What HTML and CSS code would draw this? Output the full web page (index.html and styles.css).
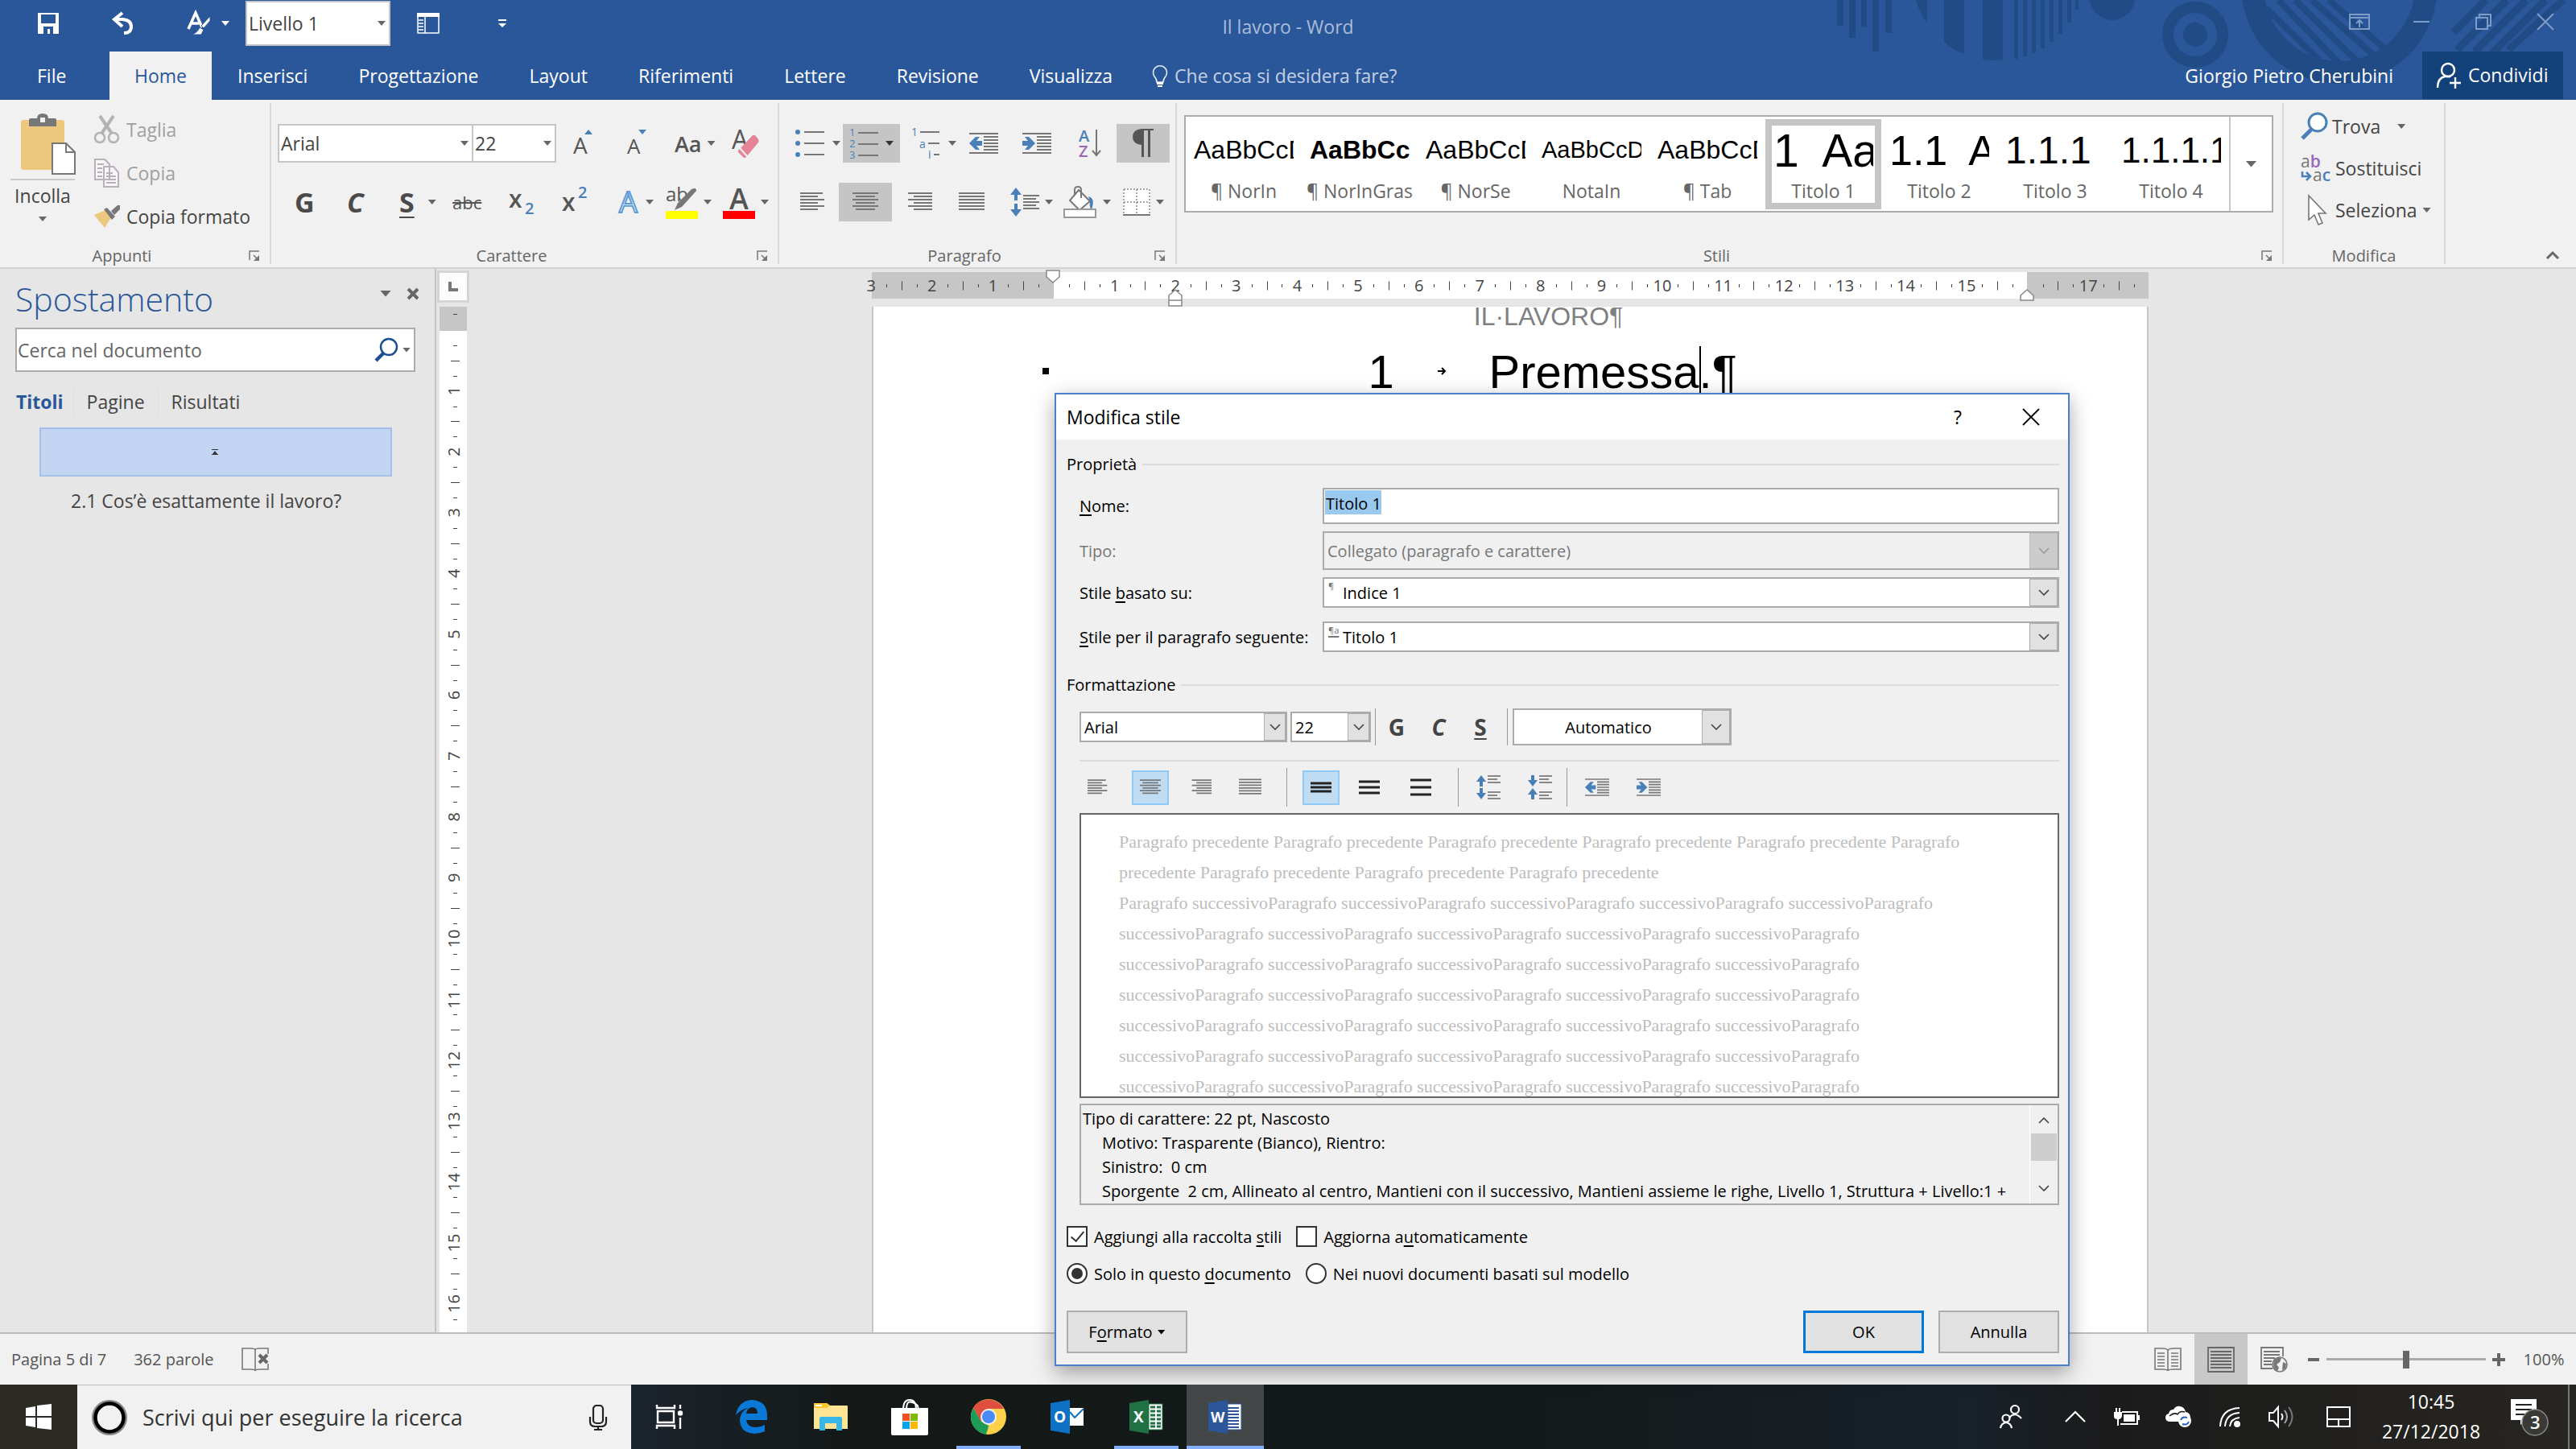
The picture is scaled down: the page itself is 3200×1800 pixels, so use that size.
FILE: index.html
```html
<!DOCTYPE html>
<html lang="it">
<head>
    <meta charset="UTF-8">
    <meta name="viewport" content="width=device-width, initial-scale=1.0">
    <title>Il lavoro - Word</title>
    <link rel="stylesheet" href="styles.css">
</head>
<body>
    <!-- Icone condivise -->
    <svg class="sprites" width="0" height="0" aria-hidden="true">
        <symbol id="al-left" viewBox="0 0 32 24"><path d="M0 1h28M0 5h22M0 9h30M0 13h22M0 17h30M0 21h22" stroke="currentColor" stroke-width="2"/></symbol>
        <symbol id="al-center" viewBox="0 0 32 24"><path d="M0 1h32M4 5h24M0 9h32M4 13h24M0 17h32M4 21h24" stroke="currentColor" stroke-width="2"/></symbol>
        <symbol id="al-right" viewBox="0 0 32 24"><path d="M2 1h30M9 5h23M2 9h30M9 13h23M2 17h30M9 21h23" stroke="currentColor" stroke-width="2"/></symbol>
        <symbol id="al-just" viewBox="0 0 32 24"><path d="M0 1h32M0 5h32M0 9h32M0 13h32M0 17h32M0 21h32" stroke="currentColor" stroke-width="2"/></symbol>
        <symbol id="outdent" viewBox="0 0 36 28"><path d="M0 2h36M18 6h18M18 10h18M18 14h18M18 18h18M18 22h18M0 26h36" stroke="#777" stroke-width="2"/><path d="M0 14l8-8h5l-4 5h7v6H9l4 5H8z" fill="#4a80b8"/></symbol>
        <symbol id="indent" viewBox="0 0 36 28"><path d="M0 2h36M18 6h18M18 10h18M18 14h18M18 18h18M18 22h18M0 26h36" stroke="#777" stroke-width="2"/><path d="M16 14L8 6H3l4 5H0v6h7l-4 5h5z" fill="#4a80b8"/></symbol>
        <symbol id="launcher" viewBox="0 0 14 14"><path d="M1 12V1h12M6 6l5 5" fill="none" stroke="#777" stroke-width="1.5"/><path d="M13 6v7H6z" fill="#777"/></symbol>
        <symbol id="chev" viewBox="0 0 14 8"><path d="M1 1l6 6 6-6" fill="none" stroke="currentColor" stroke-width="1.6"/></symbol>
    </svg>

    <header class="titlebar">
        <svg class="pattern" width="920" height="104" viewBox="2280 0 920 104" fill="#214b85" aria-hidden="true">
            <path d="M2282 0h8v32h-8zM2297 0h8v47h-8zM2312 0h7v34h-7zM2326 0h8v64h-8zM2342 0h8v41h-8z"/>
            <path d="M2380 0h14v28q-10-12-14-28zM2415 0h25v67q-15-5-25-15zM2463 0h25v74q-12 2-25 0z"/>
            <path d="M2502 0h5v73h-5zM2513 0h5v70h-5zM2524 0h5v66h-5zM2535 0h5v60h-5zM2546 0h5v52h-5zM2557 0h5v42h-5zM2568 0h5v28h-5zM2578 0h4v12h-4z"/>
            <circle cx="2624" cy="-3" r="28"/>
            <circle cx="2727" cy="43" r="34" fill="none" stroke="#214b85" stroke-width="14"/>
            <circle cx="2727" cy="43" r="15"/>
            <circle cx="2906" cy="-18" r="108" fill="none" stroke="#214b85" stroke-width="28"/>
            <path d="M2815 10L2880 74M2830 0L2905 78M2851 0L2928 76M2872 0L2948 68M2893 0L2962 60" stroke="#214b85" stroke-width="8"/>
            <path d="M3048 40L3088 0M3052 62L3114 0M3074 64L3138 0M3092 70L3162 0M3116 62L3184 0" stroke="#214b85" stroke-width="9"/>
        </svg>
        <div class="title-row">
            <div class="quick">
                <button aria-label="Salva"><svg width="26" height="26" viewBox="0 0 26 26"><path d="M0 0h26v26H0z" fill="#fff"/><path d="M4 2h18v11H4zM7 17h12v9h-4v-6h-3v6H7z" fill="#2a579a"/></svg></button>
                <button aria-label="Annulla digitazione"><svg width="28" height="28" viewBox="0 0 28 28"><path d="M13 1L3 9l10 9M4 9h9q11 1 11 9 0 8-9 8" fill="none" stroke="#fff" stroke-width="4"/></svg></button>
                <button aria-label="Stili"><svg width="30" height="30" viewBox="0 0 30 30"><path d="M1 22L10 2l8 18M4 15h10" fill="none" stroke="#fff" stroke-width="3.5"/><path d="M28 6v6l-8 9-3-3zM15 20l5 3-3 6H5q7-2 10-9z" fill="#fff" stroke="#2a579a"/></svg><span class="arr light"></span></button>
                <label class="combo level"><select aria-label="Livello"><option>Livello 1</option></select></label>
                <button aria-label="Riquadro"><svg width="28" height="26" viewBox="0 0 28 26"><path d="M1 1h26v24H1z" fill="none" stroke="#fff" stroke-width="1.5"/><path d="M0 0h28v5H0z" fill="#fff"/><path d="M10 5v20M2 9h6M2 13h6M2 17h6M2 21h6" stroke="#fff" stroke-width="1.5"/></svg></button>
                <button aria-label="Personalizza"><svg width="10" height="10" viewBox="0 0 10 10"><path d="M0 0h10v2H0zM0 5h10L5 10z" fill="#fff"/></svg></button>
            </div>
            <h1>Il lavoro - Word</h1>
            <div class="win-buttons">
                <button aria-label="Opzioni barra"><svg width="26" height="20" viewBox="0 0 26 20" fill="none" stroke="#7f9cc8" stroke-width="2"><path d="M1 1h24v18H1zM1 5h24M13 17V8M9 12l4-4 4 4"/></svg></button>
                <button aria-label="Riduci"><svg width="20" height="20" viewBox="0 0 20 20"><path d="M0 10h20" stroke="#7f9cc8" stroke-width="2"/></svg></button>
                <button aria-label="Ripristina"><svg width="20" height="20" viewBox="0 0 20 20" fill="none" stroke="#7f9cc8" stroke-width="2"><path d="M1 5h14v14H1zM5 5V1h14v14h-4"/></svg></button>
                <button aria-label="Chiudi"><svg width="20" height="20" viewBox="0 0 20 20"><path d="M0 0l20 20M20 0L0 20" stroke="#7f9cc8" stroke-width="2"/></svg></button>
            </div>
        </div>
        <nav class="tabs">
            <a href="#" class="file">File</a>
            <a href="#" class="active">Home</a>
            <a href="#">Inserisci</a>
            <a href="#">Progettazione</a>
            <a href="#">Layout</a>
            <a href="#">Riferimenti</a>
            <a href="#">Lettere</a>
            <a href="#">Revisione</a>
            <a href="#">Visualizza</a>
            <label class="tellme">
                <svg width="20" height="28" viewBox="0 0 20 28"><path d="M6 22q0-4-3-7a8.500 8.500 0 1 1 14 0q-3 3-3 7z" fill="none" stroke="#e6ecf5" stroke-width="1.600"/><path d="M6 22h8v3H6zM7 26h6v2H7z" fill="#fff"/></svg>
                <input type="text" placeholder="Che cosa si desidera fare?">
            </label>
            <a href="#" class="user">Giorgio Pietro Cherubini</a>
            <button class="share"><svg width="32" height="32" viewBox="0 0 32 32" fill="none" stroke="#fff" stroke-width="2.400"><circle cx="15" cy="9" r="8"/><path d="M2 31q0-12 9-14l7 0M17 25h14M24 18v14"/></svg>Condividi</button>
        </nav>
    </header>

    <section class="ribbon">
        <div class="group clipboard">
            <div class="clip-body">
                <button class="paste">
                    <svg width="70" height="76" viewBox="0 0 70 76"><rect x="0" y="8" width="54" height="62" rx="3" fill="#eec77e"/><path d="M10 16V8q0-2 2-2h8q0-6 7-6t7 6h8q2 0 2 2v8z" fill="#777"/><path d="M24 5h6v6h-6z" fill="#f1f1f1"/><path d="M39 37h17l11 11v27H39z" fill="#fff" stroke="#777" stroke-width="2"/><path d="M56 37v11h11" fill="none" stroke="#777" stroke-width="2"/></svg>
                    <span class="rule"></span>
                    <span>Incolla</span>
                    <span class="arr"></span>
                </button>
                <div class="clip-list">
                    <button disabled><svg width="32" height="34" viewBox="0 0 32 34" fill="none" stroke="#b3b3b3"><circle cx="7" cy="27" r="6" stroke-width="2.500"/><circle cx="24" cy="27" r="6" stroke-width="2.500"/><path d="M7 0L22 22M24 0L9 22" stroke-width="4"/></svg>Taglia</button>
                    <button disabled><svg width="32" height="36" viewBox="0 0 32 36" fill="#f6f6f6" stroke="#b9b0b9" stroke-width="2"><path d="M1 1h12l6 6v19H1zM12 10h12l6 7v18H12z"/><path d="M4 7h8M4 12h6M4 17h6M4 22h6M15 18h8M15 22h12M15 26h12M15 30h12"/></svg>Copia</button>
                    <button><svg width="32" height="28" viewBox="0 0 32 28"><path d="M0 12l14-6 8 8-9 14z" fill="#eec77e"/><path d="M12 5l4-2 10 11-4 4zM21 7l8-7h3v5l-7 7z" fill="#777"/></svg>Copia formato</button>
                </div>
            </div>
            <footer>Appunti<button class="launch" aria-label="Altro"><svg width="14" height="14"><use href="#launcher"/></svg></button></footer>
        </div>

        <div class="group font">
            <div class="row font-a">
                <label class="combo"><select aria-label="Tipo di carattere"><option>Arial</option></select></label>
                <label class="combo size"><select aria-label="Dimensione"><option>22</option></select></label>
                <button aria-label="Ingrandisci"><svg width="28" height="34" viewBox="0 0 28 34"><text x="0" y="30" font-size="28" fill="#555">A</text><path d="M14 6l5-6 5 6z" fill="#4a80b8"/></svg></button>
                <button aria-label="Riduci"><svg width="28" height="34" viewBox="0 0 28 34"><text x="0" y="30" font-size="26" fill="#555">A</text><path d="M14 0l5 6 5-6z" fill="#4a80b8"/></svg></button>
                <button aria-label="Maiuscole"><span class="glyph">Aa</span><span class="arr"></span></button>
                <button aria-label="Cancella formattazione"><svg width="36" height="38" viewBox="0 0 36 38"><text x="0" y="26" font-size="32" fill="#555">A</text><path d="M8 28L26 9q2-1 4 1l3 4q1 2 0 4L18 36q-2 2-4 0l-6-6z" fill="#e58497"/><path d="M10 25l9 10" stroke="#f1f1f1" stroke-width="2"/></svg></button>
            </div>
            <div class="row font-b">
                <button class="big"><b>G</b></button>
                <button class="big"><b><i>C</i></b></button>
                <button class="big"><b><u>S</u></b><span class="arr far"></span></button>
                <button class="abc"><s>abc</s></button>
                <button aria-label="Pedice"><svg width="34" height="36" viewBox="0 0 34 36"><text x="0" y="25" font-size="30" font-weight="600" fill="#555">x</text><text x="20" y="33" font-size="20" font-weight="600" fill="#4a80b8">2</text></svg></button>
                <button aria-label="Apice"><svg width="34" height="42" viewBox="0 0 34 42"><text x="0" y="32" font-size="30" font-weight="600" fill="#555">x</text><text x="20" y="16" font-size="20" font-weight="600" fill="#4a80b8">2</text></svg></button>
                <button aria-label="Effetti testo"><svg width="28" height="36" viewBox="0 0 28 36"><text x="2" y="31" font-size="36" fill="#fff" stroke="#5c9bd8" stroke-width="2">A</text></svg><span class="arr"></span></button>
                <button aria-label="Evidenziatore"><svg width="40" height="42" viewBox="0 0 40 42"><text x="0" y="20" font-size="24" fill="#555">ab</text><path d="M32 5q6-3 6 2L20 27l-9 4 4-9z" fill="#777"/><path d="M0 32h40v10H0z" fill="#ff0"/></svg><span class="arr"></span></button>
                <button aria-label="Colore carattere"><svg width="40" height="42" viewBox="0 0 40 42"><text x="8" y="30" font-size="36" font-weight="600" fill="#555">A</text><path d="M0 32h40v10H0z" fill="red"/></svg><span class="arr"></span></button>
            </div>
            <footer>Carattere<button class="launch" aria-label="Altro"><svg width="14" height="14"><use href="#launcher"/></svg></button></footer>
        </div>

        <div class="group para">
            <div class="row para-a">
                <button aria-label="Elenco puntato"><svg width="36" height="34" viewBox="0 0 36 34"><g fill="#4a80b8"><circle cx="3" cy="3" r="3"/><circle cx="3" cy="17" r="3"/><circle cx="3" cy="31" r="3"/></g><path d="M11 3h25M11 17h25M11 31h25" stroke="#777" stroke-width="2"/></svg><span class="arr"></span></button>
                <button class="on split" aria-label="Elenco numerato"><svg width="36" height="38" viewBox="0 0 36 38"><g fill="#4a80b8" font-size="13"><text x="0" y="10">1</text><text x="0" y="24">2</text><text x="0" y="38">3</text></g><path d="M11 6h25M11 20h25M11 34h25" stroke="#777" stroke-width="2"/></svg><span class="arr dark"></span></button>
                <button aria-label="Elenco a più livelli"><svg width="36" height="38" viewBox="0 0 36 38"><g fill="#4a80b8" font-size="14"><text x="0" y="10">1</text><text x="10" y="25">a</text><text x="21" y="38">i</text></g><path d="M11 5h24M21 19h14M28 33h7" stroke="#777" stroke-width="2"/></svg><span class="arr"></span></button>
                <button aria-label="Riduci rientro"><svg width="36" height="28"><use href="#outdent"/></svg></button>
                <button aria-label="Aumenta rientro"><svg width="36" height="28"><use href="#indent"/></svg></button>
                <button aria-label="Ordina"><svg width="28" height="38" viewBox="0 0 28 38"><text x="0" y="17" font-size="20" font-weight="600" fill="#4a80b8">A</text><text x="0" y="36" font-size="20" font-weight="600" fill="#9a68b8">Z</text><path d="M22 2v33M17 28l5 6 5-6" fill="none" stroke="#777" stroke-width="2"/></svg></button>
                <button class="on" aria-label="Mostra tutto"><svg width="26" height="36" viewBox="0 0 26 36"><path d="M11 20Q0 19 0 10T11 0h15v2h-4v33h-3V2h-5v33h-3z" fill="#555"/></svg></button>
            </div>
            <div class="row para-b">
                <button aria-label="Allinea a sinistra"><svg width="32" height="24"><use href="#al-left"/></svg></button>
                <button class="on" aria-label="Centra"><svg width="32" height="24"><use href="#al-center"/></svg></button>
                <button aria-label="Allinea a destra"><svg width="32" height="24"><use href="#al-right"/></svg></button>
                <button aria-label="Giustifica"><svg width="32" height="24"><use href="#al-just"/></svg></button>
                <button aria-label="Interlinea"><svg width="36" height="36" viewBox="0 0 36 36"><path d="M7 0l7 9H9v7H5V9H0zM7 36l7-9H9v-7H5v7H0z" fill="#4a80b8"/><path d="M16 10h20M16 14h16M16 18h20M16 22h16M16 26h20" stroke="#777" stroke-width="2"/></svg><span class="arr"></span></button>
                <button aria-label="Sfondo"><svg width="42" height="40" viewBox="0 0 42 40"><path d="M19 5l14 14-13 11L8 18zM14 12V5q0-4 4-4t4 4v10" fill="#fff" stroke="#777" stroke-width="2"/><path d="M31 13q9 2 4 16-3-1-2-10z" fill="#4a80b8"/><path d="M1 29h39v10H1z" fill="#fff" stroke="#999" stroke-width="2"/></svg><span class="arr"></span></button>
                <button aria-label="Bordi"><svg width="34" height="34" viewBox="0 0 34 34"><path d="M0 0h34v34H0z" fill="#fff"/><path d="M1 1h32v31M1 1v31M17 1v31M1 17h32" fill="none" stroke="#888" stroke-width="1.5" stroke-dasharray="2 2"/><path d="M0 33h34" stroke="#777" stroke-width="2"/></svg><span class="arr"></span></button>
            </div>
            <footer>Paragrafo<button class="launch" aria-label="Altro"><svg width="14" height="14"><use href="#launcher"/></svg></button></footer>
        </div>

        <div class="group styles">
            <div class="gallery">
                <button><span class="sample">AaBbCcDd</span><span class="name">¶ NorIn</span></button>
                <button><span class="sample"><b>AaBbCc</b></span><span class="name">¶ NorInGras</span></button>
                <button><span class="sample">AaBbCcDd</span><span class="name">¶ NorSe</span></button>
                <button><span class="sample note">AaBbCcDd</span><span class="name">NotaIn</span></button>
                <button><span class="sample">AaBbCcDd</span><span class="name">¶ Tab</span></button>
                <button class="selected"><span class="sample t1">1  Aa</span><span class="name">Titolo 1</span></button>
                <button><span class="sample t2">1.1  A</span><span class="name">Titolo 2</span></button>
                <button><span class="sample t3">1.1.1</span><span class="name">Titolo 3</span></button>
                <button><span class="sample t4">1.1.1.1</span><span class="name">Titolo 4</span></button>
                <button class="more" aria-label="Altri stili"><span class="arr wide"></span></button>
            </div>
            <footer>Stili<button class="launch" aria-label="Altro"><svg width="14" height="14"><use href="#launcher"/></svg></button></footer>
        </div>

        <div class="group edit">
            <div class="edit-list">
                <button><svg width="34" height="36" viewBox="0 0 34 36"><circle cx="21" cy="13" r="11" fill="#fff" stroke="#4a80b8" stroke-width="3"/><path d="M13 22L2 33" stroke="#4a80b8" stroke-width="5"/></svg>Trova<span class="arr far"></span></button>
                <button><svg width="38" height="36" viewBox="0 0 38 36"><text x="0" y="17" font-size="21" fill="#777">a<tspan fill="#9a68b8" font-weight="600">b</tspan></text><text x="15" y="34" font-size="21" fill="#777">a<tspan fill="#4a80b8" font-weight="600">c</tspan></text><path d="M2 22v6h9M7 23l5 5-5 5" fill="none" stroke="#4a80b8" stroke-width="2.500"/></svg>Sostituisci</button>
                <button><svg width="38" height="38" viewBox="0 0 38 38"><path d="M10 1v30l7-6 5 12 5-2-5-12h9z" fill="#fff" stroke="#777" stroke-width="1.600"/></svg>Seleziona<span class="arr"></span></button>
            </div>
            <footer>Modifica</footer>
        </div>
        <button class="collapse" aria-label="Comprimi"><svg width="18" height="12" viewBox="0 0 18 12"><path d="M2 10l7-7 7 7" fill="none" stroke="#666" stroke-width="3"/></svg></button>
    </section>

    <main class="workspace">
        <aside class="navpane">
            <div class="nav-head">
                <h2>Spostamento</h2>
                <button aria-label="Opzioni riquadro"><span class="arr wide"></span></button>
                <button aria-label="Chiudi"><svg width="14" height="14" viewBox="0 0 14 14"><path d="M1 1l12 12M13 1L1 13" stroke="#666" stroke-width="4"/></svg></button>
            </div>
            <div class="nav-search">
                <input type="text" placeholder="Cerca nel documento" aria-label="Cerca nel documento">
                <svg width="30" height="30" viewBox="0 0 30 30"><circle cx="18" cy="11" r="10" fill="none" stroke="#1e4d92" stroke-width="2.500"/><path d="M11 19L2 28" stroke="#1e4d92" stroke-width="4.500"/></svg>
                <span class="arr"></span>
            </div>
            <div class="nav-tabs">
                <a href="#" class="current">Titoli</a>
                <a href="#">Pagine</a>
                <a href="#">Risultati</a>
            </div>
            <div class="nav-current"><svg width="8" height="7" viewBox="0 0 8 7"><path d="M0 0h8v1H0zM0 6h8v1H0zM4 2l3 4H1z" fill="#333"/></svg></div>
            <a href="#" class="nav-item">2.1 Cos’è esattamente il lavoro?</a>
        </aside>
        <div class="vruler">
            <button class="tabstop" aria-label="Tabulazione"><svg width="12" height="12" viewBox="0 0 12 12"><path d="M2 0v10h10" fill="none" stroke="#777" stroke-width="4"/></svg></button>
            <svg id="rulerV" class="scale" width="34"></svg>
        </div>
        <div class="docarea">
            <svg id="rulerH" class="hscale" width="1586" height="46"></svg>
            <article class="page">
                <p class="pagehead">IL·LAVORO¶</p>
                <div class="heading">
                    <span class="dot"></span>
                    <span class="num">1</span>
                    <svg width="10" height="10" viewBox="0 0 10 10"><path d="M0 5h8M5 1l4 4-4 4" fill="none" stroke="#000" stroke-width="2"/></svg>
                    <span class="text">Premessa<span class="cursor"></span>.¶</span>
                </div>
            </article>
        </div>

        <form class="dialog" role="dialog" aria-label="Modifica stile">
            <div class="dlg-title">
                <h3>Modifica stile</h3>
                <button type="button" aria-label="Guida">?</button>
                <button type="button" aria-label="Chiudi"><svg width="20" height="20" viewBox="0 0 20 20"><path d="M0 0l20 20M20 0L0 20" stroke="#111" stroke-width="2"/></svg></button>
            </div>
            <div class="dlg-body">
                <h4>Proprietà</h4>
                <div class="fields">
                    <label for="nome"><u>N</u>ome:</label>
                    <input id="nome" class="f-name" type="text" value="Titolo 1">
                    <label for="tipo" class="off">Tipo:</label>
                    <div class="drop f-type off"><select id="tipo" disabled><option>Collegato (paragrafo e carattere)</option></select><span class="dbtn"><svg width="14" height="8"><use href="#chev"/></svg></span></div>
                    <label for="base">Stile <u>b</u>asato su:</label>
                    <div class="drop mark"><select id="base"><option>Indice 1</option></select><span class="pil">¶</span><span class="dbtn"><svg width="14" height="8"><use href="#chev"/></svg></span></div>
                    <label for="next" class="last"><u>S</u>tile per il paragrafo seguente:</label>
                    <div class="drop mark last"><select id="next"><option>Titolo 1</option></select><span class="pil"><u>¶a</u></span><span class="dbtn"><svg width="14" height="8"><use href="#chev"/></svg></span></div>
                </div>
                <h4>Formattazione</h4>
                <div class="fmt">
                    <div class="drop w-font"><select aria-label="Carattere"><option>Arial</option></select><span class="dbtn"><svg width="14" height="8"><use href="#chev"/></svg></span></div>
                    <div class="drop w-size"><select aria-label="Dimensione"><option>22</option></select><span class="dbtn"><svg width="14" height="8"><use href="#chev"/></svg></span></div>
                    <span class="vsep"></span>
                    <button type="button"><b>G</b></button>
                    <button type="button"><b><i>C</i></b></button>
                    <button type="button"><b><u>S</u></b></button>
                    <span class="vsep"></span>
                    <div class="drop w-color"><select aria-label="Colore"><option>Automatico</option></select><span class="dbtn"><svg width="14" height="8"><use href="#chev"/></svg></span></div>
                </div>
                <div class="dlg-tools">
                    <button type="button" aria-label="Sinistra"><svg width="26" height="24" preserveAspectRatio="none"><use href="#al-left"/></svg></button>
                    <button type="button" class="on" aria-label="Centro"><svg width="26" height="24"><use href="#al-center"/></svg></button>
                    <button type="button" aria-label="Destra"><svg width="26" height="24"><use href="#al-right"/></svg></button>
                    <button type="button" aria-label="Giustificato"><svg width="28" height="24"><use href="#al-just"/></svg></button>
                    <span class="vsep"></span>
                    <button type="button" class="on" aria-label="Interlinea 1"><svg width="26" height="24" viewBox="0 0 26 24"><path d="M0 7h26M0 12h26M0 17h26" stroke="#222" stroke-width="3"/></svg></button>
                    <button type="button" aria-label="Interlinea 1,5"><svg width="26" height="24" viewBox="0 0 26 24"><path d="M0 5h26M0 12h26M0 19h26" stroke="#222" stroke-width="3"/></svg></button>
                    <button type="button" aria-label="Interlinea 2"><svg width="26" height="24" viewBox="0 0 26 24"><path d="M0 3h26M0 12h26M0 21h26" stroke="#222" stroke-width="3"/></svg></button>
                    <span class="vsep"></span>
                    <button type="button" aria-label="Aumenta spaziatura"><svg width="30" height="32" viewBox="0 0 30 32"><path d="M6 1l6 8H8v6H4V9H0zM6 31l6-8H8v-6H4v6H0z" fill="#4a80b8"/><path d="M14 2h16M14 6h12M14 10h16M14 22h16M14 26h12M14 30h16" stroke="#888" stroke-width="2"/></svg></button>
                    <button type="button" aria-label="Riduci spaziatura"><svg width="30" height="32" viewBox="0 0 30 32"><path d="M6 15l6-8H8V1H4v6H0zM6 17l6 8H8v6H4v-6H0z" fill="#4a80b8"/><path d="M14 2h16M14 6h12M14 10h16M14 22h16M14 26h12M14 30h16" stroke="#888" stroke-width="2"/></svg></button>
                    <span class="vsep"></span>
                    <button type="button" aria-label="Riduci rientro"><svg width="30" height="24"><use href="#outdent"/></svg></button>
                    <button type="button" aria-label="Aumenta rientro"><svg width="30" height="24"><use href="#indent"/></svg></button>
                </div>
                <div class="preview">
                    <p>Paragrafo precedente Paragrafo precedente Paragrafo precedente Paragrafo precedente Paragrafo precedente Paragrafo<br>precedente Paragrafo precedente Paragrafo precedente Paragrafo precedente</p>
                    <p>Paragrafo successivoParagrafo successivoParagrafo successivoParagrafo successivoParagrafo successivoParagrafo<br>
                    successivoParagrafo successivoParagrafo successivoParagrafo successivoParagrafo successivoParagrafo<br>
                    successivoParagrafo successivoParagrafo successivoParagrafo successivoParagrafo successivoParagrafo<br>
                    successivoParagrafo successivoParagrafo successivoParagrafo successivoParagrafo successivoParagrafo<br>
                    successivoParagrafo successivoParagrafo successivoParagrafo successivoParagrafo successivoParagrafo<br>
                    successivoParagrafo successivoParagrafo successivoParagrafo successivoParagrafo successivoParagrafo<br>
                    successivoParagrafo successivoParagrafo successivoParagrafo successivoParagrafo successivoParagrafo</p>
                </div>
                <div class="desc">
                    <div class="desc-text">
                        <p>Tipo di carattere: 22 pt, Nascosto</p>
                        <p class="in">Motivo: Trasparente (Bianco), Rientro:</p>
                        <p class="in">Sinistro:  0 cm</p>
                        <p class="in">Sporgente  2 cm, Allineato al centro, Mantieni con il successivo, Mantieni assieme le righe, Livello 1, Struttura + Livello:1 +</p>
                    </div>
                    <div class="scroll">
                        <svg class="up" width="14" height="8"><use href="#chev"/></svg>
                        <span class="thumb"></span>
                        <svg width="14" height="8"><use href="#chev"/></svg>
                    </div>
                </div>
                <div class="checks">
                    <label><input type="checkbox" checked><span>Aggiungi alla raccolta <u>s</u>tili</span></label>
                    <label><input type="checkbox"><span>Aggiorna a<u>u</u>tomaticamente</span></label>
                </div>
                <div class="checks">
                    <label><input type="radio" name="ambito" checked><span>Solo in questo <u>d</u>ocumento</span></label>
                    <label><input type="radio" name="ambito"><span>Nei nuovi documenti basati sul modello</span></label>
                </div>
                <div class="actions">
                    <button type="button" class="format"><span>F<u>o</u>rmato</span><span class="arr black"></span></button>
                    <button type="button" class="ok">OK</button>
                    <button type="button">Annulla</button>
                </div>
            </div>
        </form>
    </main>

    <footer class="status">
        <span>Pagina 5 di 7</span>
        <span>362 parole</span>
        <svg width="34" height="30" viewBox="0 0 34 30"><path d="M1 1h10q6 0 6 2 0-2 6-2h10v26H23q-6 0-6 2 0-2-6-2H1zM17 3v26" fill="none" stroke="#777" stroke-width="1.600"/><path d="M20 8h14v12H20z" fill="#f1f1f1"/><path d="M22 9l10 10M32 9L22 19" stroke="#666" stroke-width="4"/></svg>
        <div class="views">
            <button aria-label="Lettura"><svg width="34" height="30" viewBox="0 0 34 30"><path d="M1 1h8q8 0 8 3 0-3 8-3h8v26h-8q-8 0-8 2 0-2-8-2H1zM17 4v25M4 7h9M4 11h9M4 15h9M4 19h9M4 23h9M21 7h9M21 11h9M21 15h9M21 19h9M21 23h9" fill="none" stroke="#777" stroke-width="1.600"/></svg></button>
            <button class="on" aria-label="Layout di stampa"><svg width="34" height="32" viewBox="0 0 34 32"><path d="M1 1h32v30H1zM4 6h26M4 10h26M4 14h26M4 18h26M4 22h26M4 26h26" fill="none" stroke="#666" stroke-width="1.800"/></svg></button>
            <button aria-label="Layout Web"><svg width="34" height="32" viewBox="0 0 34 32"><path d="M28 12V1H1v26h14M4 6h20M4 10h20M4 14h14M4 18h10M4 22h10" fill="none" stroke="#777" stroke-width="1.800"/><circle cx="24" cy="22" r="9" fill="#f1f1f1" stroke="#777" stroke-width="1.600"/><path d="M17 17q5-5 9-3l-2 5-4 3 3 4-2 4q-7-4-4-13zM28 19l4 2-1 6-4 2z" fill="#777"/></svg></button>
            <button class="zoom-btn" aria-label="Riduci zoom"><svg width="14" height="16" viewBox="0 0 14 16"><path d="M0 8h14" stroke="#666" stroke-width="4"/></svg></button>
            <input type="range" min="0" max="100" value="50" aria-label="Zoom">
            <button class="zoom-btn" aria-label="Aumenta zoom"><svg width="16" height="16" viewBox="0 0 16 16"><path d="M0 8h16M8 0v16" stroke="#666" stroke-width="4"/></svg></button>
            <button class="percent">100%</button>
        </div>
    </footer>

    <div class="taskbar">
        <button class="start" aria-label="Start"><svg width="32" height="32" viewBox="0 0 32 32"><path d="M0 5l12-2v12H0zM14 2l18-2v15H14zM0 17h12v12L0 27zM14 17h18v15l-18-2z" fill="#fff"/></svg></button>
        <label class="search">
            <svg width="44" height="44" viewBox="0 0 44 44"><circle cx="22" cy="22" r="20.500" fill="none" stroke="#888" stroke-width="3"/><circle cx="22" cy="22" r="17.500" fill="none" stroke="#000" stroke-width="4.500"/></svg>
            <input type="text" placeholder="Scrivi qui per eseguire la ricerca">
            <svg width="22" height="32" viewBox="0 0 22 32" fill="none" stroke="#222" stroke-width="2.200"><rect x="5" y="1" width="12" height="22" rx="4"/><path d="M1 15v6q0 6 6 6h8q6 0 6-6v-6M11 27v4M6 31h10"/></svg>
        </label>
        <button class="app" aria-label="Visualizzazione attività"><svg width="34" height="32" viewBox="0 0 34 32" fill="none" stroke="#fff" stroke-width="2.400"><path d="M1 1v4h22V1M1 31v-4h22v4M2 9h20v14H2zM30 1v5M30 17v14"/><circle cx="30" cy="11.500" r="2" fill="#fff"/></svg></button>
        <div class="apps">
            <button class="app" aria-label="Edge"><svg width="40" height="42" viewBox="0 0 40 42"><path d="M0 19Q3 1 20 0q19 1 19 20v5H13q1 9 12 9 6 0 11-3v8q-6 3-13 3Q6 41 5 26q0-11 10-16-9 2-15 9zM13 17h14q0-8-7-8-6 1-7 8z" fill="#0a78d7"/></svg></button>
            <button class="app" aria-label="Esplora file"><svg width="42" height="34" viewBox="0 0 42 34"><path d="M0 1q0-1 1-1h15l4 3h21q1 0 1 1v28H0z" fill="#ffe593"/><path d="M0 1q0-1 1-1h15l4 3-4 3H0z" fill="#fbc92d"/><path d="M2 2h8v2H2z" fill="#fff"/><path d="M7 34V19q0-2 2-2h24q2 0 2 2v15h-7v-9H14v9z" fill="#38b6e8"/></svg></button>
            <button class="app" aria-label="Store"><svg width="46" height="46" viewBox="0 0 46 46"><path d="M15 14q0-12 8-12t8 12M19 14q0-12 7-9 8 2 8 9" fill="none" stroke="#fff" stroke-width="2"/><path d="M0 12h46v32q0 2-2 2H2q-2 0-2-2z" fill="#fff"/><path d="M14 19h9v9h-9z" fill="#f25022"/><path d="M24 19h9v9h-9z" fill="#7fba00"/><path d="M14 29h9v9h-9z" fill="#00a4ef"/><path d="M24 29h9v9h-9z" fill="#ffb900"/></svg></button>
            <button class="app running" aria-label="Chrome"><svg width="44" height="44" viewBox="0 0 44 44"><circle cx="22" cy="22" r="22" fill="#fdd04a"/><path d="M22 22L12.500 27.500 3 11A22 22 0 0 1 41 12H22z" fill="#e04e40"/><path d="M3 11L12.500 27.500 22 33 20 44A22 22 0 0 1 3 11z" fill="#1c9c58"/><path d="M31.500 27.500L21 44l-2-1 4-10z" fill="#fdd04a"/><circle cx="22" cy="22" r="10" fill="#f1f1f1"/><circle cx="22" cy="22" r="8" fill="#4c8bf5"/></svg></button>
            <button class="app" aria-label="Outlook"><svg width="42" height="42" viewBox="0 0 42 42"><path d="M0 4l24-4v42L0 38z" fill="#0d72c6"/><path d="M24 10h17v22H24z" fill="#fff"/><path d="M24 15l6 7 11-11" fill="none" stroke="#0d72c6" stroke-width="2"/><text x="4" y="28" font-size="19" font-weight="700" fill="#fff">O</text></svg></button>
            <button class="app running" aria-label="Excel"><svg width="42" height="42" viewBox="0 0 42 42"><path d="M24 5h17v32H24z" fill="#fff" stroke="#207245"/><path d="M26 9h6M34 9h5M26 14h6M34 14h5M26 19h6M34 19h5M26 24h6M34 24h5M26 29h6M34 29h5M26 33h6M34 33h5" stroke="#207245" stroke-width="3"/><path d="M0 4l24-4v42L0 38z" fill="#207245"/><text x="5" y="28" font-size="19" font-weight="700" fill="#fff">X</text></svg></button>
            <button class="app running active" aria-label="Word"><svg width="42" height="42" viewBox="0 0 42 42"><path d="M24 5h17v32H24z" fill="#fff" stroke="#2b579a"/><path d="M24 10h14M24 14h14M24 18h14M24 22h14M24 26h14M24 30h14M24 34h14" stroke="#2b579a" stroke-width="2"/><path d="M0 4l24-4v42L0 38z" fill="#2b579a"/><text x="3" y="28" font-size="18" font-weight="700" fill="#fff">W</text></svg></button>
        </div>
        <div class="tray">
            <button class="people" aria-label="Contatti"><svg width="30" height="30" viewBox="0 0 30 30" fill="none" stroke="#fff" stroke-width="2.200"><circle cx="20" cy="6" r="5"/><circle cx="9" cy="17" r="4.500"/><path d="M13 16q7-8 15 1M2 29q1-6 7-7 6 1 7 7"/></svg></button>
            <button aria-label="Icone nascoste"><svg width="26" height="14" viewBox="0 0 26 14"><path d="M1 13L13 1l12 12" fill="none" stroke="#fff" stroke-width="2.200"/></svg></button>
            <button aria-label="Batteria"><svg width="32" height="22" viewBox="0 0 32 22"><path d="M10 5h19v15H8" fill="none" stroke="#fff" stroke-width="2"/><path d="M12 8h14v9H12zM29 9h3v6h-3zM0 5h10v5q-1 4-4 4v8H4v-8q-4 0-4-4zM2 0h2v5H2zM6 0h2v5H6z" fill="#fff"/></svg></button>
            <button aria-label="OneDrive"><svg width="32" height="26" viewBox="0 0 32 26"><path d="M6 19q-6 0-6-5 0-4 4-5 1-5 6-5 3-5 8-4 6 1 7 7 6 1 6 7 0 5-5 5z" fill="#fff"/><path d="M5 12q6-5 10-2 3-5 9-3" fill="none" stroke="#1a1a1a" stroke-width="1.500"/><circle cx="24" cy="18" r="8" fill="#fff"/><path d="M19 17q2-5 8-3M29 19q-2 5-8 3" fill="none" stroke="#2060c0" stroke-width="2"/></svg></button>
            <button aria-label="Rete"><svg width="26" height="26" viewBox="0 0 26 26" fill="none" stroke="#fff" stroke-width="2"><path d="M1 25Q2 3 25 2M7 25Q8 9 25 8M13 25q1-10 12-11"/><circle cx="22" cy="22" r="3" fill="#fff"/></svg></button>
            <button aria-label="Volume"><svg width="32" height="28" viewBox="0 0 32 28" fill="none" stroke="#fff" stroke-width="2"><path d="M1 9h5l6-7v24l-6-7H1zM16 10q3 4 0 8"/><path d="M20 6q6 8 0 16" stroke="#aaa"/><path d="M25 2q9 12 0 24" stroke="#777"/></svg></button>
            <button class="pad" aria-label="Touchpad"><svg width="30" height="26" viewBox="0 0 30 26" fill="none" stroke="#fff" stroke-width="2"><path d="M1 1h28v24H1zM1 16h28M15 16v9"/></svg></button>
            <button class="clock"><span>10:45</span><span>27/12/2018</span></button>
            <button class="notif" aria-label="Notifiche"><svg width="48" height="48" viewBox="0 0 48 48"><path d="M0 2h32v26H18l-6 6v-6H0z" fill="#fff"/><path d="M6 9h20M6 15h20M6 21h12" stroke="#222" stroke-width="2"/><circle cx="30" cy="31" r="16" fill="#3a3936" stroke="#888" stroke-width="1.500"/><text x="24" y="39" font-size="22" font-weight="600" fill="#fff">3</text></svg></button>
            <button class="desk" aria-label="Mostra desktop"></button>
        </div>
    </div>

    <script>
        const NS = "http://www.w3.org/2000/svg";
        const CM = 75.6; // un centimetro sullo schermo

        function add(svg, name, attrs, text) {
            const el = document.createElementNS(NS, name);
            for (const k in attrs) el.setAttribute(k, attrs[k]);
            if (text !== undefined) el.textContent = text;
            svg.appendChild(el);
        }

        // Righello orizzontale
        function rigaOrizzontale() {
            const svg = document.getElementById("rulerH");
            add(svg, "rect", { x: 0, y: 3, width: 1586, height: 33, fill: "#c6c6c6" });
            add(svg, "rect", { x: 226, y: 3, width: 1209, height: 33, fill: "#fff" });
            for (let n = -3; n <= 17; n++) {
                const x = 226 + n * CM;
                if (n !== 0 && n !== 16) {
                    add(svg, "text", { x: x, y: 27, "text-anchor": "middle" }, Math.abs(n));
                }
                [0.25, 0.5, 0.75].forEach(q => {
                    const h = q === 0.5 ? 11 : 4;
                    add(svg, "rect", { x: Math.round(x + q * CM), y: 20 - h / 2, width: 1, height: h, fill: "#444" });
                });
            }
            // Indicatori di rientro
            const m = { fill: "#fff", stroke: "#888", "stroke-width": 1.5 };
            add(svg, "path", { d: "M217 1h16v8l-8 7-8-7z", ...m });
            add(svg, "path", { d: "M369 38v-6l8-7 8 7v6zM369 38h16v7h-16z", ...m });
            add(svg, "path", { d: "M1427 38v-6l8-7 8 7v6z", ...m });
        }

        // Righello verticale
        function rigaVerticale() {
            const svg = document.getElementById("rulerV");
            add(svg, "rect", { x: 0, y: 0, width: 34, height: 30, fill: "#c6c6c6" });
            for (let n = 0; n <= 16; n++) {
                const y = 29 + n * CM;
                if (n > 0) {
                    add(svg, "text", { x: 0, y: 0, "text-anchor": "middle", transform: `translate(25 ${y}) rotate(-90)` }, n);
                }
                [0.25, 0.5, 0.75].forEach(q => {
                    const w = q === 0.5 ? 11 : 5;
                    add(svg, "rect", { x: 19 - (w - 1) / 2, y: Math.round(y + q * CM), width: w, height: 1, fill: "#444" });
                });
            }
            add(svg, "rect", { x: 17, y: 9, width: 5, height: 1, fill: "#444" });
        }

        rigaOrizzontale();
        rigaVerticale();
    </script>
</body>
</html>
```

FILE: styles.css
```css
* {
    box-sizing: border-box;
}

body {
    margin: 0;
    height: 100vh;
    display: flex;
    flex-direction: column;
    overflow: hidden;
    font-family: "Open Sans", "Noto Sans", sans-serif;
    font-size: 23px;
    color: #444;
    background: #e6e6e6;
}

h1, h2, h3, h4, p {
    margin: 0;
    font-weight: 400;
}

a {
    color: inherit;
    text-decoration: none;
}

button, input, select {
    font: inherit;
    color: inherit;
}

button {
    display: flex;
    align-items: center;
    padding: 0;
    border: 0;
    background: none;
    white-space: nowrap;
}

svg {
    display: block;
    flex: none;
    overflow: visible;
}

.sprites {
    position: absolute;
}

/* Freccette dei menu */
.arr {
    flex: none;
    width: 10px;
    height: 6px;
    background: #666;
    clip-path: polygon(0 0, 100% 0, 50% 100%);
}

.arr.light { background: #fff; }
.arr.dark { background: #333; }
.arr.black { background: #000; }
.arr.wide { width: 14px; height: 8px; }

/* Barra del titolo */
.titlebar {
    position: relative;
    flex: none;
    background: #2a579a;
    color: #fff;
}

.pattern {
    position: absolute;
    top: 0;
    right: 0;
    overflow: hidden;
}

.title-row {
    position: relative;
    display: grid;
    grid-template-columns: 1fr auto 1fr;
    height: 64px;
}

.title-row h1 {
    font-size: 23px;
    line-height: 66px;
    color: #a9bcd9;
}

.quick {
    display: grid;
    grid-template-columns: 92px 94px 72px 213px 101px 40px;
    align-items: center;
    height: 58px;
    padding-left: 47px;
}

.quick .arr {
    margin-left: 12px;
}

.combo {
    position: relative;
    display: block;
    height: 48px;
}

.combo select {
    width: 100%;
    height: 100%;
    padding: 0 2px;
    appearance: none;
    background: #fff;
    border: 2px solid #c6c6c6;
    border-radius: 0;
    color: #444;
}

.combo::after {
    content: "";
    position: absolute;
    right: 6px;
    top: 50%;
    width: 10px;
    height: 6px;
    margin-top: -3px;
    background: #666;
    clip-path: polygon(0 0, 100% 0, 50% 100%);
}

.combo.level {
    width: 180px;
    height: 56px;
}

.win-buttons {
    display: flex;
    justify-content: flex-end;
    height: 54px;
}

.win-buttons button {
    width: 77px;
    justify-content: center;
}

.tabs {
    position: relative;
    display: flex;
    height: 60px;
    line-height: 61px;
}

.tabs a {
    padding: 0 31px 0 32px;
}

.tabs .file {
    width: 136px;
    padding: 0 0 0 46px;
}

.tabs .active {
    padding: 0 31px;
    background: #f1f1f1;
    color: #2a579a;
}

.tellme {
    display: flex;
    align-items: center;
    gap: 8px;
    flex: 1;
    padding-left: 18px;
}

.tellme input {
    width: 320px;
    padding: 0;
    border: 0;
    background: none;
}

.tellme input::placeholder {
    color: #c4d0e4;
}

.tabs .user {
    padding: 0 36px;
}

.share {
    width: 175px;
    height: 59px;
    margin-right: 16px;
    padding-left: 17px;
    gap: 8px;
    background: #13417a;
}

/* Barra multifunzione */
.ribbon {
    flex: none;
    display: flex;
    height: 210px;
    background: #f1f1f1;
    border-bottom: 2px solid #d2d2d2;
}

.group {
    position: relative;
    flex: none;
    display: flex;
    flex-direction: column;
    margin: 4px 0;
    border-right: 2px solid #d8d8d8;
}

.group footer {
    margin-top: auto;
    height: 24px;
    line-height: 28px;
    font-size: 20px;
    color: #666;
    text-align: center;
}

.group .launch {
    position: absolute;
    right: 12px;
    bottom: 3px;
}

.clipboard { width: 337px; }
.font { width: 631px; }
.para { width: 494px; }
.styles { width: 1375px; }
.edit { width: 201px; }

.group:not(.edit) footer {
    padding-right: 32px;
}

.clip-body {
    display: flex;
    padding: 13px 0 0 15px;
}

.paste {
    flex-direction: column;
    width: 76px;
    margin-right: 26px;
}

.paste svg {
    margin-left: 16px;
}

.paste .rule {
    width: 80px;
    height: 2px;
    margin: 5px 0 3px;
    background: #c9c9c9;
}

.paste .arr {
    margin-top: 10px;
}

.clip-list button {
    height: 54px;
    gap: 8px;
}

.clip-list {
    margin-top: -7px;
}

.clip-list button:disabled {
    color: #a0a0a0;
}

.row {
    display: grid;
    height: 48px;
}

.font,
.para {
    gap: 25px;
    padding-top: 26px;
}

.row button {
    height: 48px;
    gap: 7px;
}

.row .on {
    width: 66px;
    justify-content: center;
    background: #c5c5c5;
}

.row .on.split {
    width: 71px;
    gap: 9px;
}

.font-a {
    grid-template-columns: 243px 124px 67px 59px 71px 50px;
    padding-left: 8px;
}

.font-b {
    grid-template-columns: 65px 65px 66px 70px 66px 69px 60px 71px 60px;
    padding-left: 29px;
}

.combo.size {
    width: 103px;
}

.combo.size select {
    border-left: 0;
}

.glyph {
    font-size: 27px;
    font-weight: 600;
    color: #555;
}

.big {
    font-size: 34px;
    color: #4a4a4a;
}

.big u {
    text-decoration-thickness: 2px;
    text-underline-offset: 5px;
}

.big .far {
    margin-left: 10px;
}

.abc {
    font-size: 22px;
    color: #555;
}

.para-a {
    grid-template-columns: 59px 85px 72px 66px 70px 47px 66px;
    padding-left: 20px;
    color: #666;
}

.para-b {
    grid-template-columns: 48px 84px 65px 64px 66px 74px 60px;
    padding-left: 26px;
    color: #777;
}

.para-a button { gap: 10px; }

/* Raccolta stili */
.gallery {
    display: flex;
    align-items: center;
    height: 121px;
    margin: 15px 11px 0 9px;
    border: 2px solid #ababab;
    background: #fff;
}

.gallery button {
    flex-direction: column;
    width: 144px;
    height: 112px;
    padding: 5px 10px;
}

.gallery .selected {
    box-shadow: inset 0 0 0 8px #c5c5c5;
}

.sample {
    display: flex;
    align-items: center;
    width: 124px;
    height: 68px;
    overflow: hidden;
    white-space: pre;
    font-family: "Liberation Sans", Arial, sans-serif;
    font-size: 32px;
    color: #000;
}

.sample.note { font-size: 29px; }
.sample.t1 { font-size: 57px; }
.sample.t2 { font-size: 52px; }
.sample.t3 { font-size: 48px; }
.sample.t4 { font-size: 44px; }

.name {
    line-height: 32px;
    color: #666;
}

.gallery .more {
    flex: 1;
    justify-content: center;
    height: 100%;
    border-left: 2px solid #c6c6c6;
}

.edit-list {
    display: flex;
    flex-direction: column;
    padding: 3px 0 0 21px;
}

.edit-list button {
    height: 52px;
    gap: 5px;
}

.edit-list .arr.far {
    margin-left: 16px;
}

.edit-list .arr {
    margin-left: 2px;
}

.collapse {
    align-self: flex-end;
    margin: 0 20px 9px auto;
}

/* Area di lavoro */
.workspace {
    position: relative;
    flex: 1;
    min-height: 0;
    display: flex;
    border-bottom: 2px solid #bdbdbd;
}

.navpane {
    flex: none;
    width: 542px;
    border-right: 2px solid #c3c3c3;
}

.nav-head {
    display: flex;
    align-items: center;
    height: 73px;
    padding: 0 20px 0 19px;
    gap: 20px;
}

.nav-head h2 {
    flex: 1;
    font-size: 41px;
    font-weight: 300;
    color: #2a579a;
}

.nav-head button {
    margin-bottom: 12px;
}

.nav-search {
    display: flex;
    align-items: center;
    height: 55px;
    margin: 0 24px 0 19px;
    padding-right: 4px;
    gap: 5px;
    background: #fff;
    border: 2px solid #ababab;
}

.nav-search input {
    flex: 1;
    padding: 0 1px;
    border: 0;
    background: none;
}

.nav-search input::placeholder {
    color: #666;
}

.nav-tabs {
    display: flex;
    margin: 20px 0 15px;
    line-height: 34px;
}

.nav-tabs a {
    padding: 0 16px;
    border-left: 1px solid #dcdcdc;
}

.nav-tabs a:first-child {
    padding: 0 12px 0 20px;
    border: 0;
}

.nav-tabs .current {
    font-weight: 700;
    color: #2a579a;
}

.nav-current {
    display: flex;
    align-items: center;
    justify-content: center;
    height: 61px;
    margin: 0 53px 0 49px;
    padding-right: 2px;
    background: #c2d5f2;
    border: 2px solid #a6bfe6;
}

.nav-item {
    display: block;
    padding-left: 88px;
    line-height: 60px;
}

.vruler {
    flex: none;
    display: flex;
    flex-direction: column;
    align-items: center;
    width: 41px;
}

.tabstop {
    flex: none;
    justify-content: center;
    width: 40px;
    height: 40px;
    margin: 2px 0 5px;
    background: #fdfdfd;
    border: 3px solid #d4d4d4;
}

.scale {
    flex: 1;
    min-height: 0;
    overflow: hidden;
    background: #fff;
}

.scale text,
.hscale text {
    font-size: 20px;
    fill: #444;
}

.docarea {
    flex: 1;
    display: flex;
    flex-direction: column;
    align-items: center;
    padding: 1px 32px 0 0;
}

.page {
    flex: 1;
    width: 1586px;
    overflow: hidden;
    background: #fff;
    border: solid #c6c6c6;
    border-width: 0 2px;
    font-family: "Liberation Sans", Arial, sans-serif;
    color: #000;
}

.pagehead {
    height: 30px;
    padding-left: 96px;
    line-height: 24px;
    font-size: 32px;
    color: #808080;
    text-align: center;
}

.heading {
    display: grid;
    grid-template-columns: 405px 86px 64px auto;
    align-items: center;
    height: 100px;
    padding-left: 210px;
    font-size: 58px;
}

.heading .dot {
    width: 8px;
    height: 8px;
    background: #000;
}

.heading .cursor {
    display: inline-block;
    width: 2px;
    height: 64px;
    margin-right: -2px;
    background: #000;
    vertical-align: -12px;
}

/* Finestra Modifica stile */
.dialog {
    position: absolute;
    top: 154px;
    left: 1310px;
    width: 1261px;
    font-size: 20px;
    color: #000;
    background: #f0f0f0;
    border: 2px solid #4a7fd0;
    box-shadow: 0 8px 24px rgba(0, 0, 0, 0.35);
}

.dlg-title {
    display: flex;
    align-items: center;
    height: 56px;
    padding: 0 36px 0 13px;
    background: #fff;
    font-size: 23px;
}

.dlg-title h3 {
    flex: 1;
    font-size: 23px;
}

.dlg-title button + button {
    margin-left: 76px;
}

.dlg-body {
    padding: 16px 11px 14px 13px;
}

.dlg-body h4 {
    display: flex;
    align-items: center;
    gap: 7px;
    line-height: 30px;
}

.dlg-body h4::after {
    content: "";
    flex: 1;
    height: 2px;
    background: #dcdcdc;
}

.fields {
    display: grid;
    grid-template-columns: 302px 1fr;
    row-gap: 9px;
    align-items: center;
    margin: 14px 0 26px;
    padding-left: 16px;
}

.fields label.off {
    color: #777;
}

.fields .last {
    margin-top: 8px;
}

.dialog u {
    text-decoration-thickness: 2px;
    text-underline-offset: 3px;
}

.f-name {
    height: 45px;
    padding: 0 2px 6px;
    border: 2px solid #ababab;
    /* testo selezionato */
    background: linear-gradient(#99c9ef, #99c9ef) 1px 1px / 70px 30px no-repeat #fff;
}

.drop {
    position: relative;
    height: 38px;
}

.drop select {
    width: 100%;
    height: 100%;
    padding: 0 4px;
    appearance: none;
    background: #fff;
    border: 2px solid #ababab;
    border-radius: 0;
    opacity: 1;
}

.drop.mark select {
    padding-left: 23px;
}

.drop .pil {
    position: absolute;
    left: 7px;
    top: 4px;
    font-size: 11px;
    line-height: 14px;
    color: #777;
}

.dbtn {
    position: absolute;
    top: 2px;
    right: 2px;
    bottom: 2px;
    width: 35px;
    display: flex;
    align-items: center;
    justify-content: center;
    background: #e1e1e1;
    border: 1px solid #adadad;
    color: #444;
    pointer-events: none;
}

.drop.f-type {
    height: 48px;
}

.drop.off select {
    background: #f0f0f0;
    color: #777;
}

.drop.off .dbtn {
    background: #ccc;
    border-color: #bfbfbf;
    color: #999;
}

.fmt {
    display: flex;
    align-items: center;
    height: 46px;
    margin: 14px 0 18px;
    padding-left: 16px;
}

.fmt button {
    width: 52px;
    justify-content: center;
    font-size: 28px;
    color: #444;
}

.fmt .w-font { width: 258px; margin-right: 4px; }
.fmt .w-size { width: 100px; margin-right: 5px; }
.fmt .w-font .dbtn, .fmt .w-size .dbtn { width: 27px; }
.fmt .w-color { width: 272px; height: 46px; }
.fmt .w-color select { padding: 0 34px 0 0; text-align-last: center; }

.vsep {
    flex: none;
    width: 1px;
    height: 46px;
    background: #999;
}

.fmt button + .vsep {
    margin: 0 6px 0 7px;
}

.dlg-tools {
    display: grid;
    grid-template-columns: 65px 63px 61px 68px 20px 60px 64px 69px 15px 64px 56px 15px 64px 46px;
    align-items: center;
    height: 66px;
    margin-left: 16px;
    border-top: 2px solid #dcdcdc;
    color: #777;
}

.dlg-tools button {
    width: 46px;
    height: 43px;
    justify-content: center;
    border: 2px solid transparent;
}

.dlg-tools .on {
    background: #c0dcf3;
    border-color: #90c8f6;
}

.dlg-tools .vsep {
    height: 48px;
}

.preview {
    height: 354px;
    margin-left: 16px;
    padding: 15px 0 0 47px;
    overflow: hidden;
    background: #fff;
    border: 2px solid #666;
    font-family: "Liberation Serif", "Times New Roman", serif;
    font-size: 22px;
    line-height: 38px;
    color: #bdbdbd;
    white-space: nowrap;
}

.desc {
    display: flex;
    height: 126px;
    margin: 7px 0 0 16px;
    border: 2px solid #ababab;
}

.desc-text {
    flex: 1;
    min-width: 0;
    padding: 2px 0 0 2px;
    line-height: 30px;
    overflow: hidden;
}

.desc-text p {
    white-space: pre;
}

.desc .in {
    padding-left: 24px;
}

.scroll {
    display: flex;
    flex-direction: column;
    align-items: center;
    width: 35px;
    padding: 15px 0;
    color: #444;
    border-left: 1px solid #fff;
}

.scroll .up {
    transform: rotate(180deg);
}

.scroll .thumb {
    width: 32px;
    height: 34px;
    margin: 12px 0 auto;
    background: #cdcdcd;
}

.checks {
    display: flex;
    gap: 18px;
    margin-top: 16px;
}

.desc + .checks {
    margin-top: 24px;
}

.checks label {
    display: flex;
    align-items: center;
    gap: 8px;
    height: 30px;
}

.checks input {
    position: relative;
    width: 26px;
    height: 26px;
    margin: 0;
    appearance: none;
    background: #fff;
    border: 2px solid #333;
}

.checks input[type="checkbox"]:checked::after {
    content: "";
    position: absolute;
    left: 7px;
    top: 1px;
    width: 7px;
    height: 14px;
    border: solid #333;
    border-width: 0 2px 2px 0;
    transform: rotate(40deg);
}

.checks input[type="radio"] {
    border-radius: 50%;
}

.checks input[type="radio"]:checked::after {
    content: "";
    position: absolute;
    inset: 4px;
    border-radius: 50%;
    background: #333;
}

.actions {
    display: flex;
    gap: 18px;
    margin-top: 31px;
}

.actions button {
    justify-content: center;
    width: 150px;
    height: 53px;
    background: #e1e1e1;
    border: 2px solid #adadad;
}

.actions .format {
    margin-right: auto;
    gap: 6px;
}

.actions .ok {
    border: 3px solid #0078d7;
}

/* Barra di stato */
.status {
    flex: none;
    display: flex;
    align-items: center;
    gap: 34px;
    height: 63px;
    padding-left: 14px;
    font-size: 20px;
    color: #555;
    background: #f1f1f1;
}

.views {
    display: flex;
    align-items: center;
    margin-left: auto;
    height: 100%;
}

.views button {
    width: 66px;
    height: 100%;
    justify-content: center;
}

.views .on {
    background: #c8c8c8;
}

.views .zoom-btn {
    width: 32px;
}

.views .percent {
    width: 80px;
}

.views input {
    width: 198px;
    height: 22px;
    margin: 0;
    appearance: none;
    background: linear-gradient(#aaa, #aaa) center / 100% 3px no-repeat;
}

.views input::-webkit-slider-thumb {
    appearance: none;
    width: 8px;
    height: 22px;
    background: #666;
}

/* Barra delle applicazioni */
.taskbar {
    flex: none;
    display: flex;
    height: 80px;
    color: #fff;
    background: linear-gradient(90deg, #2b2a25 0 3%, #1b232b 25%, #141917 33%, #131a1a 60%, #18212a 76%, #1b1b1b 82%, #282622 100%);
}

.start {
    width: 96px;
    justify-content: center;
}

.search {
    display: flex;
    align-items: center;
    width: 688px;
    padding: 0 30px 0 18px;
    gap: 19px;
    background: #f1f1f1;
    border-top: 1px solid #bbb;
}

.search input {
    flex: 1;
    padding: 0;
    border: 0;
    background: none;
    font-size: 27px;
}

.search input::placeholder {
    color: #333;
}

.app {
    position: relative;
    width: 96px;
    height: 80px;
    justify-content: center;
}

.apps {
    display: flex;
    gap: 2px;
    padding-left: 6px;
}

.app.running::after {
    content: "";
    position: absolute;
    left: 8px;
    right: 8px;
    bottom: 0;
    height: 4px;
    background: #82aefc;
}

.app.active {
    background: #434747;
}

.app.active::after {
    left: 0;
    right: 0;
}

.tray {
    display: flex;
    margin-left: auto;
}

.tray button {
    width: 64px;
    justify-content: center;
}

.tray .people { width: 97px; }
.tray .pad { width: 78px; }
.tray .notif { width: 94px; }

.tray .clock {
    flex-direction: column;
    width: 152px;
    line-height: 37px;
}

.tray .desk {
    width: 10px;
    border-left: 2px solid #777;
}
```
